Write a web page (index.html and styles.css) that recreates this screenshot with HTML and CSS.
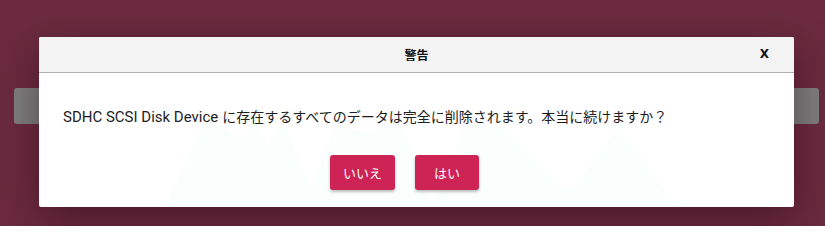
FILE: index.html
```html
<!DOCTYPE html>
<html lang="ja">
<head>
<meta charset="utf-8">
<link rel="stylesheet" href="styles.css">
</head>
<body>
<div class="screen">
  <div class="page">
    <div class="under-bar"></div>
  </div>
  <div class="dialog">
    <div class="dialog-header">
      <span class="dialog-title">警告</span>
      <span class="dialog-close">X</span>
    </div>
    <div class="dialog-body">
      <svg class="mountains" width="755" height="134" viewBox="0 0 755 134" aria-hidden="true">
        <polygon points="126,134 166,47 204,64 216,47 228,75 244,47 279,134" />
        <polygon points="262,134 298,52 328,60 361,47 393,134" />
        <polygon points="393,134 426,53 451,49 466,57 530,120 580,53 638,134" />
      </svg>
      <p class="message"><span class="latin">SDHC SCSI Disk Device</span> <span class="cjk">に存在するすべてのデータは完全に削除されます。本当に続けますか？</span></p>
      <div class="actions">
        <button class="btn">いいえ</button>
        <button class="btn">はい</button>
      </div>
    </div>
  </div>
</div>
</body>
</html>
```

FILE: styles.css
```css
html, body {
  margin: 0;
  padding: 0;
  overflow: hidden;
}
body {
  font-family: Roboto, "Noto Sans CJK JP", sans-serif;
}
.screen {
  position: relative;
  width: 825px;
  height: 226px;
  overflow: hidden;
  background: #6b2a3f;
}
.page {
  padding: 88px 6px 0 14px;
}
.under-bar {
  height: 36px;
  background: #7f7f7f;
  border-radius: 3px;
}
.dialog {
  position: absolute;
  left: 39px;
  top: 37px;
  width: 755px;
  height: 170px;
  background: #ffffff;
  border-radius: 2px;
  box-shadow: 0 12px 40px rgba(30, 5, 15, 0.45);
  display: flex;
  flex-direction: column;
  overflow: hidden;
}
.dialog-header {
  height: 35px;
  background: #f3f3f3;
  border-bottom: 1px solid #b0b0b0;
  position: relative;
  display: flex;
  align-items: center;
  justify-content: center;
  flex-shrink: 0;
}
.dialog-title {
  font-family: "Noto Sans CJK JP", sans-serif;
  font-weight: 700;
  font-size: 12px;
  color: #111;
}
.dialog-close {
  position: absolute;
  right: 25px;
  top: 10px;
  font-family: "DejaVu Sans", sans-serif;
  font-weight: 700;
  font-size: 12px;
  color: #111;
}
.dialog-body {
  position: relative;
  flex: 1;
  display: flex;
  flex-direction: column;
}
.mountains {
  position: absolute;
  left: 0;
  top: 0;
}
.mountains polygon {
  fill: #fafefd;
}
.message {
  position: relative;
  margin: 33px 0 0 24px;
  line-height: 20px;
  color: #1e1e1e;
  white-space: nowrap;
}
.latin {
  font-family: Roboto, sans-serif;
  font-size: 15px;
}
.cjk {
  font-family: "Noto Sans CJK JP", sans-serif;
  font-size: 14px;
}
.actions {
  position: relative;
  margin-top: 28px;
  display: flex;
  justify-content: center;
  gap: 20px;
  padding-right: 24px;
}
.btn {
  height: 35px;
  min-width: 64px;
  padding: 0 13px;
  border: none;
  border-radius: 3px;
  background: #cd2355;
  color: #ffffff;
  font-family: "Noto Sans CJK JP", sans-serif;
  font-size: 13px;
  box-shadow: 0 2px 3px rgba(0, 0, 0, 0.25);
}
```
